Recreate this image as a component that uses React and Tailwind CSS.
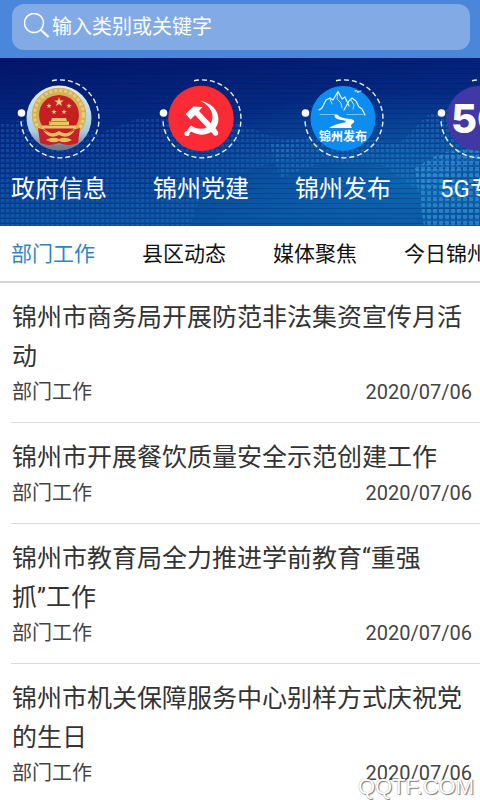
import React from "react";

const channels = [
  { id: 1, name: "政府信息", Icon: EmblemIcon },
  { id: 2, name: "锦州党建", Icon: PartyIcon },
  { id: 3, name: "锦州发布", Icon: MountainIcon },
  { id: 4, name: "5G专题", Icon: FiveGIcon },
];

const tabs = ["部门工作", "县区动态", "媒体聚焦", "今日锦州"];

const articles = [
  { id: 1, title: "锦州市商务局开展防范非法集资宣传月活动", category: "部门工作", date: "2020/07/06" },
  { id: 2, title: "锦州市开展餐饮质量安全示范创建工作", category: "部门工作", date: "2020/07/06" },
  { id: 3, title: "锦州市教育局全力推进学前教育“重强\n抓”工作", category: "部门工作", date: "2020/07/06" },
  { id: 4, title: "锦州市机关保障服务中心别样方式庆祝党的生日", category: "部门工作", date: "2020/07/06" },
];

const STAR = "M0 -5 L1.2 -1.6 L4.8 -1.5 L1.9 0.6 L2.9 4 L0 2 L-2.9 4 L-1.9 0.6 L-4.8 -1.5 L-1.2 -1.6 Z";

// dashed ring with the white dot on its left
function Ring({ children }) {
  return (
    <svg viewBox="0 0 84 84" className="w-[84px] h-[84px]" aria-hidden="true">
      {children}
      <path d="M35 3.7 A39 39 0 1 1 4 43" fill="none" stroke="#e8f0ff" strokeWidth="1.4" strokeDasharray="5 3" />
      <circle cx="4.5" cy="36" r="3.8" fill="#fff" />
    </svg>
  );
}

function EmblemIcon() {
  return (
    <Ring>
      <defs>
        <linearGradient id="emblemSky" x1="0" y1="0" x2="0" y2="1">
          <stop offset="0" stopColor="#e3eee8" />
          <stop offset="0.7" stopColor="#a9cde4" />
          <stop offset="1" stopColor="#6d7585" />
        </linearGradient>
        <clipPath id="emblemClip">
          <circle cx="42" cy="41" r="32.5" />
        </clipPath>
      </defs>
      <circle cx="42" cy="41" r="32.5" fill="url(#emblemSky)" />
      <g clipPath="url(#emblemClip)">
        <circle cx="42" cy="38" r="23.5" fill="none" stroke="#d6b054" strokeWidth="7.5" />
        <circle cx="42" cy="38" r="24.5" fill="none" stroke="#e6cd80" strokeWidth="3" strokeDasharray="3 2" />
        <circle cx="42" cy="38" r="20" fill="#c51f22" />
        <path d="M21 51 L28 53 Q35 60 42 56 Q49 60 56 53 L63 51 L61 66 Q52 70 42 66 Q32 70 23 66 Z" fill="#c8202a" />
        <path d={STAR} transform="translate(42 25)" fill="#f3d27a" />
        <path d={STAR} transform="translate(32 29) scale(.55)" fill="#f3d27a" />
        <path d={STAR} transform="translate(52 29) scale(.55)" fill="#f3d27a" />
        <path d={STAR} transform="translate(37 35) scale(.55)" fill="#f3d27a" />
        <path d={STAR} transform="translate(47 35) scale(.55)" fill="#f3d27a" />
        <path d="M35 41 H49 L50 44 H34 Z M32 44.5 H52 V48 H32 Z M25 48.5 H59 V51.5 H25 Z" fill="#eac765" />
        <path d="M26 53 Q34 59 42 54 Q50 59 58 53 Q52 63 42 58 Q32 63 26 53 Z" fill="#e6bf5c" />
        <path d="M29 63 Q36 59 42 62 Q48 59 55 63 Q48 67 42 64 Q36 67 29 63 Z" fill="#e6bf5c" />
        <path d="M8 64 Q42 73 76 64 V76 H8 Z" fill="#737889" opacity=".75" />
      </g>
    </Ring>
  );
}

function PartyIcon() {
  return (
    <Ring>
      <circle cx="42" cy="41.5" r="32.8" fill="#fb2b36" />
      <g fill="#fff">
        <path d="M41.5 24 C54 26 61.5 36 59 46 C56 57 42 61 32.5 54.5 L30.5 56 L28 53.5 L32 48.5 C39 53.5 48 53 52 46 C56 38 52 29 41.5 24 Z" />
        <path d="M26.5 37 L34.5 29.5 L43.5 30 L40 34 L58 53 L54 57 L36 38 L31.5 42.5 Z" />
        <circle cx="28" cy="56.5" r="2.6" />
        <circle cx="56.5" cy="56" r="2.7" />
      </g>
    </Ring>
  );
}

function MountainIcon() {
  return (
    <Ring>
      <circle cx="42" cy="41.5" r="32.5" fill="#0d8df0" />
      <g fill="none" stroke="#e9f6ff" strokeLinecap="round" strokeLinejoin="round">
        <path d="M18 33 L21 31 L25 23 L29 21 L32 23 L37 14.5 L41 22 L44 20 L48 29" strokeWidth="1.2" />
        <path d="M43 33 L48 24 L51 21 L55 24 L58 30 L61 32 L64 38" strokeWidth="1.2" />
        <path d="M37 15 L36 22 L40 26 L41 31 M50 23 L53 28 L52 32 M29 22 L31 27" strokeWidth=".8" />
        <path d="M19 37.5 H36 M46 37.5 H62" strokeWidth=".5" />
        <path d="M54 14 Q56 13 57 15.5 Q58 14 60 14" strokeWidth="1.1" />
      </g>
      <path d="M33.5 38 Q33 42 40 43 Q47 43.500 44 45.500 Q33 47 28 51 H51 Q49 48.500 51 47 Q56 44 50 42 Q38 41 37 38 Z" fill="#fff" />
      <text x="42" y="64" textAnchor="middle" fontSize="12" fontWeight="700" fill="#fff">锦州发布</text>
    </Ring>
  );
}

function FiveGIcon() {
  return (
    <Ring>
      <circle cx="42" cy="41.5" r="32.5" fill="#4038a4" />
      <text x="14" y="56" fontSize="40" fontWeight="800" fill="#fff" className="font-['Inter',sans-serif]">5G</text>
    </Ring>
  );
}

function BannerBackground() {
  return (
    <svg className="absolute inset-0 w-full h-full" viewBox="0 0 480 168" preserveAspectRatio="xMidYMid slice" aria-hidden="true">
      <defs>
        <linearGradient id="sea" x1="0" y1="0" x2="0.25" y2="1">
          <stop offset="0" stopColor="#02146a" />
          <stop offset="0.5" stopColor="#052f88" />
          <stop offset="1" stopColor="#0850a0" />
        </linearGradient>
        <radialGradient id="glow" cx=".85" cy=".75" r=".55">
          <stop offset="0" stopColor="#0f6db4" stopOpacity=".75" />
          <stop offset="1" stopColor="#0f6db4" stopOpacity="0" />
        </radialGradient>
        <pattern id="dots" width="5" height="5" patternUnits="userSpaceOnUse">
          <rect x="1" y="1" width="3" height="3" fill="#2f86d6" />
        </pattern>
        <pattern id="bigDots" width="6" height="6" patternUnits="userSpaceOnUse">
          <rect x="1" y="1" width="4" height="4" rx="1" fill="#45a5de" />
        </pattern>
        <pattern id="lines" width="5" height="5" patternUnits="userSpaceOnUse">
          <rect width="5" height="1" fill="#02104f" />
        </pattern>
      </defs>
      <rect width="480" height="168" fill="url(#sea)" />
      <rect width="480" height="168" fill="url(#glow)" />
      <rect width="480" height="168" fill="url(#lines)" opacity=".25" />
      <path d="M0 65 L40 60 L100 75 L140 60 L230 62 L270 78 L300 80 L290 100 L240 115 L200 140 L190 168 L0 168 Z" fill="url(#dots)" opacity=".25" />
      <path d="M270 85 L330 78 L400 85 L430 55 L480 45 L480 100 L420 135 L415 130 L380 105 L320 105 L280 120 Z" fill="url(#dots)" opacity=".35" />
      <path d="M415 110 L440 95 L480 90 L480 168 L424 168 Z" fill="url(#bigDots)" opacity=".5" />
    </svg>
  );
}

function ArticleItem({ article }) {
  return (
    <li className="ml-[11px] pt-[15px] pb-[14px] border-b border-[#dcdcdc] last:border-b-0 last:pb-0">
      <a href="#article" className="block pl-px pr-2">
        <h2 className="text-[25px] leading-[39px] whitespace-pre-line">{article.title}</h2>
        <div className="flex justify-between text-[20px] leading-8 text-[#444]">
          <span>{article.category}</span>
          <time>{article.date}</time>
        </div>
      </a>
    </li>
  );
}

export default function App() {
  return (
    <div lang="zh-CN" className="relative min-h-screen overflow-hidden bg-white text-[#333] font-['Roboto','Noto_Sans_CJK_SC',sans-serif]">
      <header className="bg-[#4a86da] pt-1 pb-2 pl-3 pr-[10px]">
        <label className="flex items-center h-[46px] rounded-xl bg-[#82abe5] pl-3">
          <svg viewBox="0 0 28 28" className="w-7 h-7 shrink-0" fill="none" stroke="#fff" aria-hidden="true">
            <circle cx="10" cy="10" r="9.500" strokeWidth="1.500" />
            <path d="M17 17 L24.500 24" strokeWidth="2.200" />
          </svg>
          <input
            type="text"
            aria-label="搜索"
            placeholder="输入类别或关键字"
            className="w-full min-w-0 bg-transparent text-[20px] leading-7 text-white placeholder:text-white placeholder:opacity-100 outline-none"
          />
        </label>
      </header>

      <section className="relative bg-[#052f88] overflow-hidden">
        <BannerBackground />
        <div className="relative flex gap-[46px] pl-[11px] pt-[19px] pb-[19px] overflow-hidden">
          {channels.map(({ id, name, Icon }) => (
            <button key={id} type="button" className="flex flex-col items-center gap-[10px] shrink-0 text-white cursor-pointer">
              <Icon />
              <span className="text-[24px] leading-9 whitespace-nowrap">{name}</span>
            </button>
          ))}
        </div>
      </section>

      <nav className="flex gap-[47px] pl-[11px] h-[57px] items-center overflow-hidden border-b-2 border-[#d6d6d6]">
        {tabs.map((tab, index) => (
          <button
            key={tab}
            type="button"
            className={`shrink-0 text-[21px] leading-8 whitespace-nowrap cursor-pointer ${index === 0 ? "text-[#2f86c5]" : "text-[#111]"}`}
          >
            {tab}
          </button>
        ))}
      </nav>

      <ul>
        {articles.map((article) => (
          <ArticleItem key={article.id} article={article} />
        ))}
      </ul>

      <span className="absolute right-[6px] bottom-0 text-[22px] leading-[26px] text-white font-['Liberation_Sans',sans-serif] [text-shadow:1px_1px_1px_#777,0_0_1px_#999]">
        QQTF.COM
      </span>
    </div>
  );
}
